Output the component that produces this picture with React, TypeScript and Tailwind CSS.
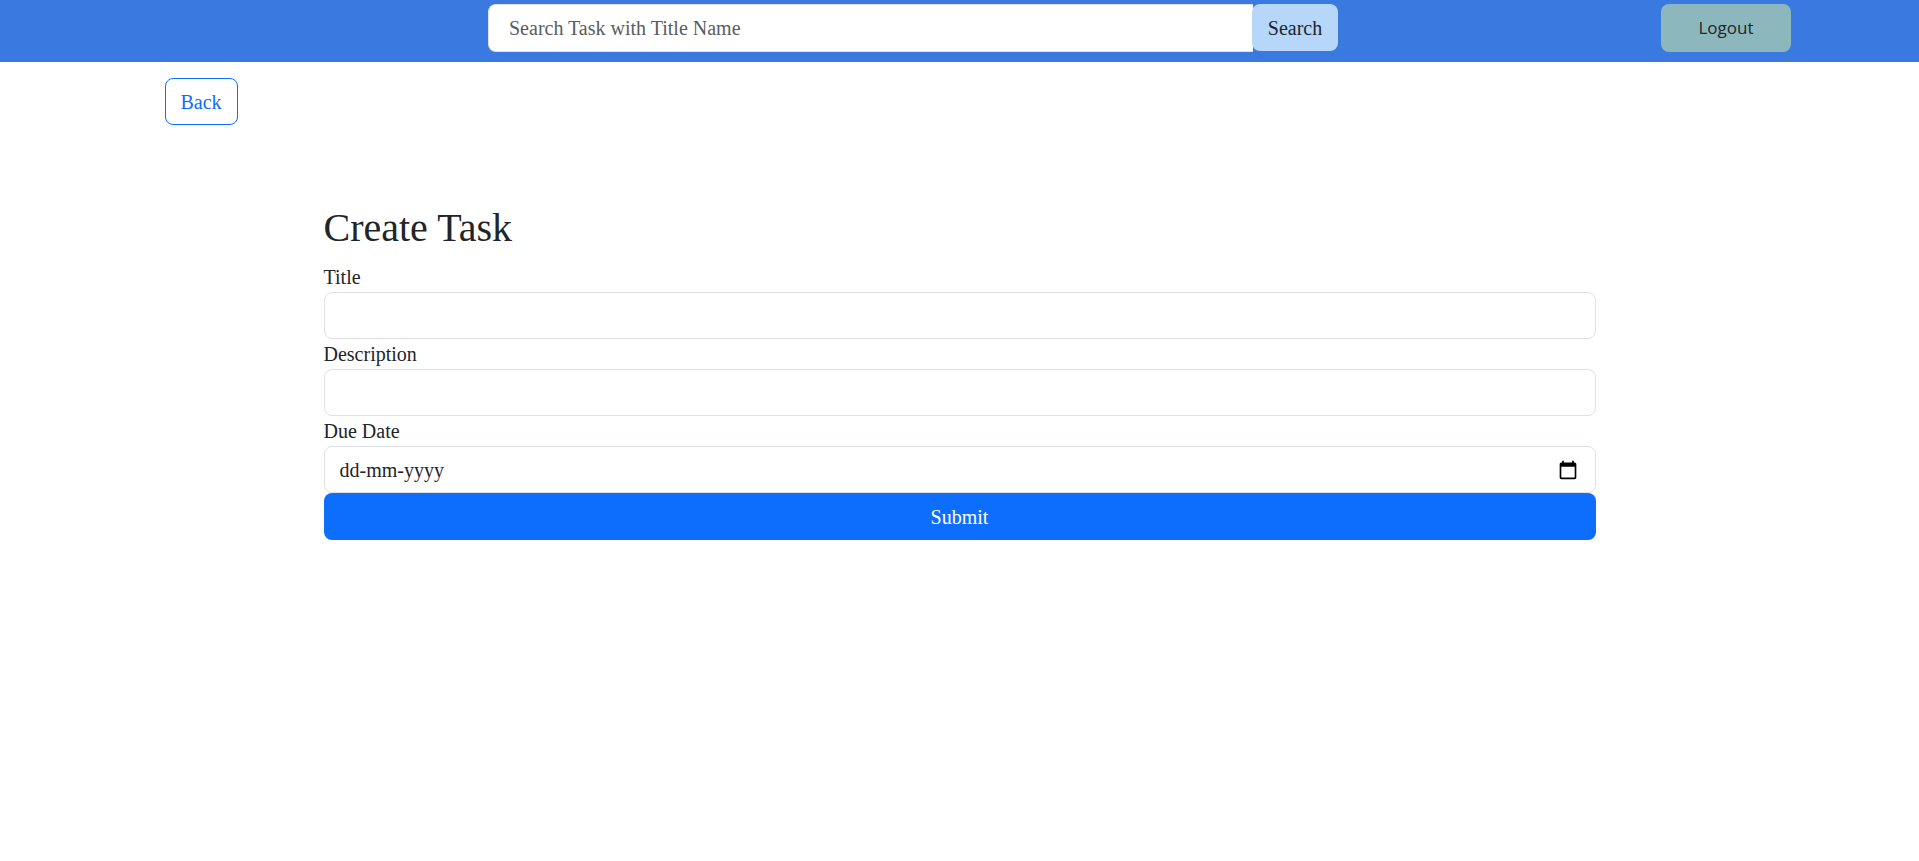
import { useState } from "react";

const fieldClass =
  "block h-[47px] w-full rounded-lg border border-[#dee2e6] bg-white px-[15px] text-xl text-[#212529] outline-none focus:border-[#86b7fe]";

function CalendarIcon() {
  return (
    <svg width="20" height="20" viewBox="0 0 24 24" fill="#000" aria-hidden="true">
      <path d="M20 3h-1V1h-2v2H7V1H5v2H4c-1.1 0-2 .9-2 2v16c0 1.1.9 2 2 2h16c1.1 0 2-.9 2-2V5c0-1.1-.9-2-2-2zm0 18H4V8h16v13z" />
    </svg>
  );
}

function NavBar() {
  return (
    <nav className="flex h-[62px] items-start bg-[#3a79e0] pt-1 pr-32 pl-[25.43%]">
      <form role="search" className="flex w-[65.25%] items-start" onSubmit={(e) => e.preventDefault()}>
        <input
          type="search"
          aria-label="Search Task with Title Name"
          placeholder="Search Task with Title Name"
          className="h-12 min-w-0 flex-1 rounded-l-lg border border-r-0 border-[#dee2e6] bg-white px-5 text-xl text-[#212529] outline-none placeholder:text-[#595c5f]"
        />
        <button
          type="submit"
          className="-ml-px h-[47px] rounded-lg bg-[#b6d7fa] px-4 text-xl text-[#212529]"
        >
          Search
        </button>
      </form>
      <button
        type="button"
        className="ml-auto h-12 w-[130px] rounded-lg bg-[#8cb8bd] font-['Open_Sans',sans-serif] text-[17px] text-[#212529]"
      >
        Logout
      </button>
    </nav>
  );
}

export default function App() {
  const [title, setTitle] = useState("");
  const [description, setDescription] = useState("");
  const [dueDate, setDueDate] = useState("");

  return (
    <div className="min-h-screen bg-white font-['Liberation_Serif',serif] text-xl leading-[30px] text-[#212529]">
      <NavBar />
      <main className="mx-auto max-w-[1650px] px-[30px] pt-4">
        <a
          href="#tasks"
          className="inline-flex h-[47px] items-center rounded-lg border border-[#0d6efd] px-[15px] text-[#0d6efd]"
        >
          Back
        </a>
        <form className="mx-auto w-4/5 pt-[79px]" onSubmit={(e) => e.preventDefault()}>
          <h1 className="mb-[10px] text-[40px] leading-[48px]">Create Task</h1>
          <label htmlFor="title" className="block">
            Title
          </label>
          <input
            id="title"
            type="text"
            value={title}
            onChange={(e) => setTitle(e.target.value)}
            className={fieldClass}
          />
          <label htmlFor="description" className="block">
            Description
          </label>
          <input
            id="description"
            type="text"
            value={description}
            onChange={(e) => setDescription(e.target.value)}
            className={fieldClass}
          />
          <label htmlFor="due-date" className="block">
            Due Date
          </label>
          <div className="flex h-[47px] items-center rounded-lg border border-[#dee2e6] bg-white pr-[17px] pl-[15px]">
            <input
              id="due-date"
              type="text"
              inputMode="numeric"
              placeholder="dd-mm-yyyy"
              value={dueDate}
              onChange={(e) => setDueDate(e.target.value)}
              className="min-w-0 flex-1 bg-transparent text-xl outline-none placeholder:text-[#212529]"
            />
            <button type="button" aria-label="Choose a date">
              <CalendarIcon />
            </button>
          </div>
          <button type="submit" className="h-[47px] w-full rounded-lg bg-[#0d6efd] text-white">
            Submit
          </button>
        </form>
      </main>
    </div>
  );
}
